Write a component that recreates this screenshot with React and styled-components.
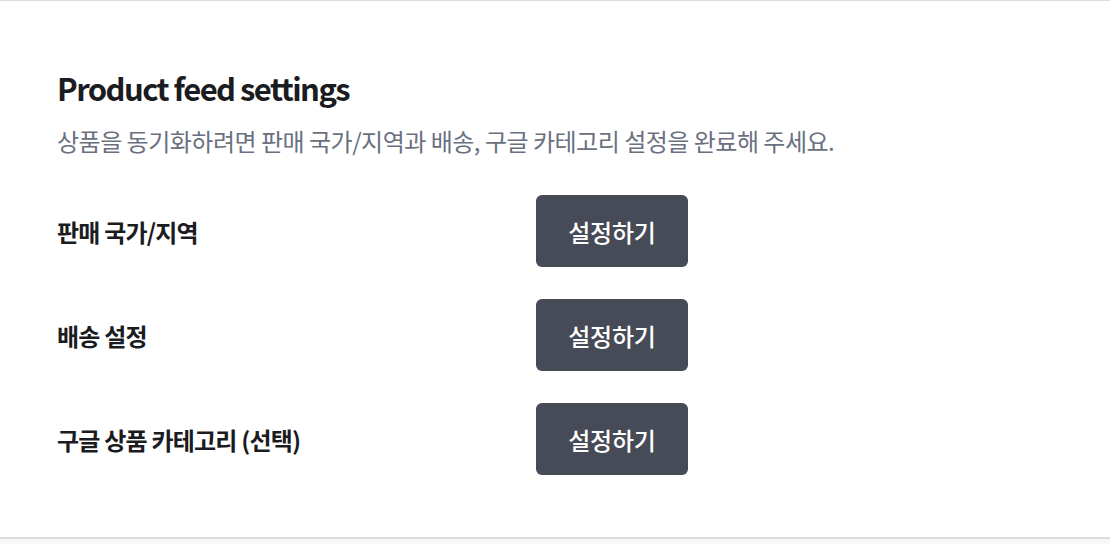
import React from "react";
import styled, { createGlobalStyle } from "styled-components";

const Global = createGlobalStyle`
  html, body { margin: 0; padding: 0; background: #f7f7f8; }
  body { font-family: "Noto Sans CJK KR", "Noto Sans", sans-serif; }
`;

const Card = styled.section`
  background: #ffffff;
  border-top: 1px solid #dcdce0;
  border-bottom: 2px solid #d9d9de;
  height: 539px;
  box-sizing: border-box;
  padding: 67px 57px 0;
`;

const Title = styled.h1`
  margin: 0;
  font-size: 31px;
  font-weight: 700;
  letter-spacing: -1.55px;
  color: #1b1c22;
  line-height: 40px;
`;

const Subtitle = styled.p`
  margin: 17px 0 0;
  font-size: 24px;
  font-weight: 400;
  letter-spacing: -0.5px;
  color: #6a7080;
  line-height: 32px;
`;

const Rows = styled.div`
  margin-top: 38px;
  display: flex;
  flex-direction: column;
  gap: 32px;
`;

const Row = styled.div`
  display: grid;
  grid-template-columns: 479px auto;
  align-items: center;
`;

const Label = styled.span`
  font-size: 24px;
  font-weight: 700;
  letter-spacing: -0.8px;
  color: #1b1c22;
`;

const Button = styled.button`
  width: 152px;
  height: 72px;
  border: none;
  border-radius: 6px;
  background: #474b57;
  color: #ffffff;
  font-family: inherit;
  font-size: 24px;
  font-weight: 500;
  letter-spacing: -0.2px;
  padding: 0;
  cursor: pointer;
`;

const rows = ["판매 국가/지역", "배송 설정", "구글 상품 카테고리 (선택)"];

export default function App() {
  return (
    <>
      <Global />
      <Card>
        <Title>Product feed settings</Title>
        <Subtitle>
          상품을 동기화하려면 판매 국가/지역과 배송, 구글 카테고리 설정을 완료해 주세요.
        </Subtitle>
        <Rows>
          {rows.map((r) => (
            <Row key={r}>
              <Label>{r}</Label>
              <Button>설정하기</Button>
            </Row>
          ))}
        </Rows>
      </Card>
    </>
  );
}
